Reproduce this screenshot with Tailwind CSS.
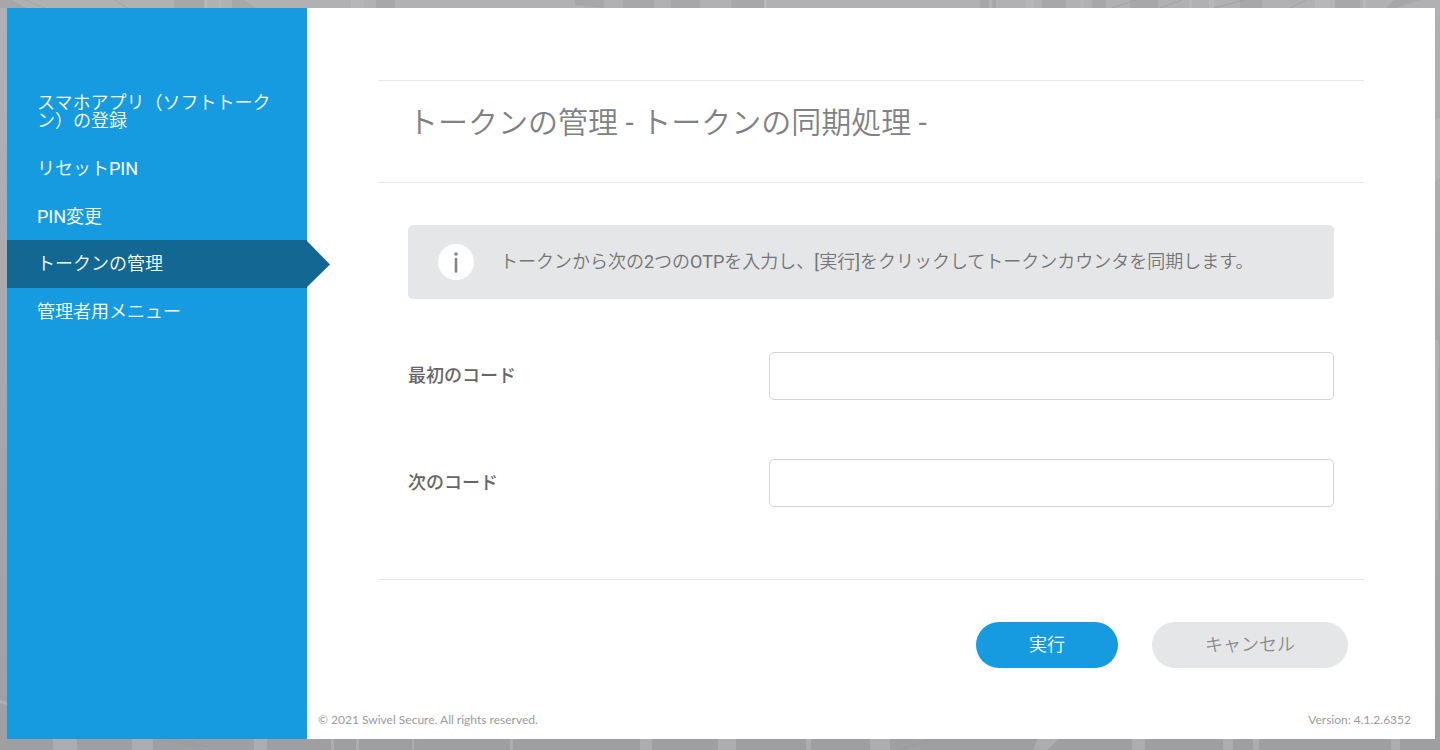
<!DOCTYPE html>
<html lang="ja">
<head>
<meta charset="utf-8">
<meta name="viewport" content="width=device-width, initial-scale=1">
<title>トークンの管理</title>
<script src="https://cdn.jsdelivr.net/npm/@tailwindcss/browser@4"></script>
</head>
<body class="relative isolate flex min-h-screen bg-[#a9a9ab] pt-2 pr-[5px] pb-[11px] pl-[7px] font-['Roboto','Noto_Sans_CJK_JP_DemiLight','Noto_Sans_CJK_JP',sans-serif] text-lg leading-[18px] font-normal">
  <!-- Building facade behind the panel -->
  <svg class="absolute inset-0 -z-10 h-full w-full" viewBox="0 0 1440 750" preserveAspectRatio="none" aria-hidden="true">
    <defs>
      <linearGradient id="shade" x1="0" y1="0" x2="0" y2="1">
        <stop offset="0" stop-color="#b1b1b3"/>
        <stop offset="1" stop-color="#9f9fa1"/>
      </linearGradient>
    </defs>
    <rect width="1440" height="750" fill="url(#shade)"/>
    <g fill="#a7a7a9">
      <path d="M0 0h12l14 8H0zM174 0h30v8h-30zM232 0h12l12 8h-24zM376 0h19v8h-19zM575 0h29v8l-29-3zM623 0h31v8h-31zM671 0h29v8h-29zM731 0h33v8h-33zM980 0h16v8h-16zM1042 0h24v8h-24zM1092 0h14v8h-14zM1130 0h28v8h-28zM1240 0h22v8h-22zM1330 0h30v8h-30zM1394 0h26l-24 8h-10z"/>
    </g>
    <g fill="#bababc" opacity=".6">
      <path d="M205 0h2v8h-2zM219 0h2v8h-2zM351 0h13v8h-13zM764 0h3v8h-3zM989 0h3v8h-3zM1026 0h8v8h-8zM1080 0h4v8h-4zM1189 0h3v8h-3zM1209 0h5v8h-5zM1315 0h20v8h-20zM1363 0h3v8h-3zM1435 120l5-2v60l-5 3zM1435 340h3v180h-3zM0 700l7 2v3l-7-2z"/>
    </g>
    <g fill="#b3b3b5" opacity=".7">
      <path d="M53 739h24v11H53zM132 739h21v11h-21zM254 739h13v11h-13zM331 739h3v11h-3zM356 739h3v11h-3zM412 739h2v11h-2zM510 739h3v11h-3zM640 739h12v11h-12zM718 739h18v11h-18zM806 739h5v11h-5zM870 739h20v11h-20zM1038 739l20 0-10 11h-15zM1132 739h13v11h-13zM1223 739h10v11h-10zM1253 739h6v11h-6zM1391 739h9v11h-9z"/>
    </g>
    <path d="M25 0l20 8M115 0l12 8M160 739l40 8M172 739l38 8M1112 8l24-8M1160 8l22-8M1214 8l30-8M1290 8l16-8M900 750l30-11" stroke="#989899" stroke-width="1" opacity=".5"/>
  </svg>

  <aside class="w-[300px] shrink-0 bg-[#169be0] pt-[70px] text-white">
    <nav aria-label="メニュー">
      <a href="#" class="block pt-4 pr-9 pb-3.5 pl-[30px]">スマホアプリ（ソフトトークン）の登録</a>
      <a href="#" class="block pt-4 pr-9 pb-3.5 pl-[30px]">リセットPIN</a>
      <a href="#" class="block pt-4 pr-9 pb-3.5 pl-[30px]">PIN変更</a>
      <a href="#" aria-current="page" class="relative block bg-[#136893] py-[15px] pr-9 pl-[30px]">トークンの管理
        <svg class="absolute top-0 left-full h-full w-[23px]" viewBox="0 0 23 48" preserveAspectRatio="none" aria-hidden="true"><path d="M0 1L23 24.5L0 47Z" fill="#136893"/></svg>
      </a>
      <a href="#" class="block py-[15px] pr-9 pl-[30px]">管理者用メニュー</a>
    </nav>
  </aside>

  <div class="flex min-w-0 flex-1 flex-col bg-white">
    <main class="mx-[71px] mt-[72px] flex-1 border-t border-[#e6e7e8]">
      <h1 class="border-b border-[#e6e7e8] px-[30px] pt-6 pb-[41px] text-[30px] leading-9 text-[#808184]">トークンの管理 - トークンの同期処理 -</h1>
      <form>
        <div class="mx-[30px] mt-[42px] flex items-center gap-[26px] rounded-[5px] bg-[#e5e6e8] py-[19px] pr-6 pl-[30px] text-[#747575]">
          <svg class="size-9 shrink-0" viewBox="0 0 36 36" aria-hidden="true"><circle cx="18" cy="18" r="18" fill="#fff"/><circle cx="18" cy="10" r="1.8" fill="#808184"/><path d="M18 15v12.6" stroke="#808184" stroke-width="2.5" stroke-linecap="round"/></svg>
          <p>トークンから次の2つのOTPを入力し、[実行]をクリックしてトークンカウンタを同期します。</p>
        </div>
        <div class="mx-[30px] mt-[53px] mb-[72px] flex flex-col gap-[59px] font-['Roboto','Noto_Sans_CJK_JP',sans-serif]">
          <div class="flex items-center">
            <label for="first" class="flex-1 font-medium text-[#666]">最初のコード</label>
            <input id="first" type="text" class="h-12 w-[61%] rounded-[5px] border border-[#d2d3d4] bg-white px-3">
          </div>
          <div class="flex items-center">
            <label for="second" class="flex-1 font-medium text-[#666]">次のコード</label>
            <input id="second" type="text" class="h-12 w-[61%] rounded-[5px] border border-[#d2d3d4] bg-white px-3">
          </div>
        </div>
        <div class="flex justify-end gap-[34px] border-t border-[#e6e7e8] pt-[42px] pr-4">
          <button type="submit" class="h-[46px] rounded-full bg-[#169be0] px-[53px] text-white">実行</button>
          <button type="button" class="h-[46px] rounded-full bg-[#e5e6e8] px-[53px] text-[#8a8b8d]">キャンセル</button>
        </div>
      </form>
    </main>
    <footer class="flex justify-between pr-6 pb-2.5 pl-[11px] font-['Lato',sans-serif] text-xs leading-[18px] font-normal text-[#999a9c]">
      <span>© 2021 Swivel Secure. All rights reserved.</span>
      <span>Version: 4.1.2.6352</span>
    </footer>
  </div>
</body>
</html>
